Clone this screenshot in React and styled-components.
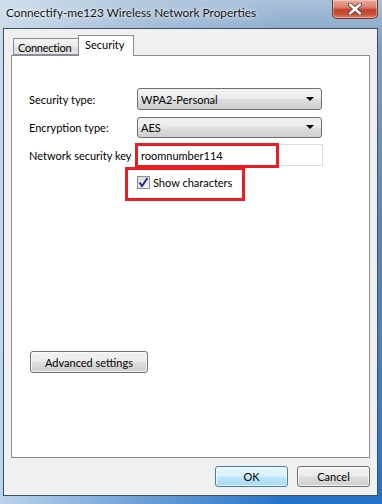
import React from "react"
import styled, { createGlobalStyle } from "styled-components"

const GlobalStyle = createGlobalStyle`
  html, body {
    margin: 0;
    padding: 0;
    width: 382px;
    height: 504px;
    overflow: hidden;
    background: #6f93bb;
  }
  * {
    box-sizing: border-box;
  }
`

const Window = styled.div`
  width: 382px;
  height: 504px;
  display: flex;
  flex-direction: column;
  font-family: Lato, "Liberation Sans", sans-serif;
  font-size: 11px;
  color: #000;
  background:
    linear-gradient(90deg, rgba(214, 228, 240, 0.85) 0%, rgba(190, 210, 230, 0.5) 35%, rgba(120, 150, 190, 0) 75%),
    linear-gradient(180deg, #a9c1da 0%, #7c9cc1 10%, #5d86b4 45%, #3b7fc4 80%, #2272c9 100%);
`

const TitleBar = styled.div`
  height: 28px;
  display: flex;
  align-items: flex-start;
  padding-left: 6px;
`

const Title = styled.div`
  margin-top: 5px;
  font-size: 11.8px;
  color: #111;
  text-shadow: 0 0 6px rgba(255, 255, 255, 0.9), 0 0 2px rgba(255, 255, 255, 0.8);
`

const CloseButton = styled.div`
  margin-left: auto;
  margin-right: 4px;
  width: 46px;
  height: 19px;
  border: 1px solid #6e3a35;
  border-top: none;
  border-radius: 0 0 5px 5px;
  background: linear-gradient(180deg, #e9a99b 0%, #d98271 40%, #c2422a 55%, #cc5236 80%, #e0836b 100%);
  box-shadow: inset 0 0 0 1px rgba(255, 255, 255, 0.35);
  display: flex;
  align-items: center;
  justify-content: center;
`

const Client = styled.div`
  flex: 1;
  margin: 0 4px 8px 3px;
  border: 1px solid #3b4e66;
  background: #f0f0f0;
  padding: 6px 7px 8px 7px;
  display: flex;
  flex-direction: column;
`

const TabRow = styled.div`
  height: 20px;
  display: flex;
  align-items: flex-end;
  padding-left: 2px;
`

const Tab = styled.div`
  position: relative;
  height: ${(p) => (p.active ? "21px" : "17px")};
  width: ${(p) => p.w}px;
  margin-left: ${(p) => (p.active ? "-1px" : "0")};
  margin-bottom: ${(p) => (p.active ? "-1px" : "0")};
  z-index: ${(p) => (p.active ? 2 : 1)};
  border: 1px solid #898c95;
  border-bottom: ${(p) => (p.active ? "none" : "1px solid #898c95")};
  background: ${(p) => (p.active ? "#fff" : "linear-gradient(180deg, #f3f3f3 0%, #ebebeb 50%, #dedede 51%, #e5e5e5 100%)")};
  padding: ${(p) => (p.active ? "2px 0 0 6px" : "2px 0 0 4px")};
  letter-spacing: ${(p) => (p.active ? "0" : "-0.25px")};
  line-height: 14px;
  white-space: nowrap;
  overflow: hidden;
`

const Panel = styled.div`
  flex: 1;
  position: relative;
  z-index: 1;
  border: 1px solid #898c95;
  background: #fff;
  padding: 32px 0 0 17px;
  display: flex;
  flex-direction: column;
`

const FormGrid = styled.div`
  display: grid;
  grid-template-columns: 108px auto;
  grid-auto-rows: 22px;
  row-gap: 6px;
  align-items: center;
`

const Label = styled.div`
  white-space: nowrap;
`

const Select = styled.div`
  width: 185px;
  height: ${(p) => p.h || 22}px;
  border: 1px solid #707070;
  border-radius: 3px;
  background: linear-gradient(180deg, #f2f2f2 0%, #ebebeb 48%, #dddddd 52%, #cfcfcf 100%);
  display: flex;
  align-items: center;
  padding-left: 3px;
  padding-right: 7px;
`

const Arrow = styled.span`
  margin-left: auto;
  width: 0;
  height: 0;
  border-left: 4px solid transparent;
  border-right: 4px solid transparent;
  border-top: 4px solid #000;
`

const KeyField = styled.div`
  position: relative;
  margin-left: -2px;
  width: 188px;
  height: 22px;
  border: 1px solid #dadde4;
  background: #fff;
  display: flex;
  align-items: center;
  padding-left: 5px;
`

const Highlight = styled.div`
  position: absolute;
  left: ${(p) => p.x}px;
  top: ${(p) => p.y}px;
  width: ${(p) => p.w}px;
  height: ${(p) => p.h}px;
  border: 3px solid #ed1c24;
  pointer-events: none;
`

const CheckRow = styled.div`
  position: relative;
  margin: 10px 0 0 108px;
  display: flex;
  align-items: center;
  gap: 3px;
  height: 13px;
`

const CheckBox = styled.div`
  width: 13px;
  height: 13px;
  border: 1px solid #8f8f8f;
  background: linear-gradient(135deg, #dcdcdc 0%, #f6f6f6 100%);
  display: flex;
  align-items: center;
  justify-content: center;
`

const Button = styled.div`
  width: ${(p) => p.w}px;
  height: ${(p) => p.h || 22}px;
  border: 1px solid ${(p) => (p.primary ? "#3c7fb1" : "#707070")};
  border-radius: 3px;
  background: ${(p) =>
    p.primary
      ? "linear-gradient(180deg, #eaf6fd 0%, #d9f0fc 48%, #bee6fd 52%, #a7d9f5 100%)"
      : "linear-gradient(180deg, #f2f2f2 0%, #ebebeb 48%, #dddddd 52%, #cfcfcf 100%)"};
  box-shadow: inset 0 0 0 1px rgba(255, 255, 255, 0.7);
  display: flex;
  align-items: center;
  justify-content: center;
  white-space: nowrap;
`

const AdvancedWrap = styled.div`
  margin: 162px 0 0 1px;
`

const ButtonRow = styled.div`
  display: flex;
  justify-content: flex-end;
  gap: 9px;
  margin-top: 8px;
`

const App = () => {
  return (
    <>
      <GlobalStyle />
      <Window>
        <TitleBar>
          <Title>Connectify-me123 Wireless Network Properties</Title>
          <CloseButton>
            <svg width="14" height="12" viewBox="0 0 14 12">
              <path d="M2 1.5 L12 10.5 M12 1.5 L2 10.5" stroke="#5a3a36" strokeWidth="4.2" strokeLinecap="round" />
              <path d="M2 1.5 L12 10.5 M12 1.5 L2 10.5" stroke="#fff" strokeWidth="2.4" strokeLinecap="round" />
            </svg>
          </CloseButton>
        </TitleBar>
        <Client>
          <TabRow>
            <Tab w={66}>Connection</Tab>
            <Tab active w={56}>Security</Tab>
          </TabRow>
          <Panel>
            <FormGrid>
              <Label>Security type:</Label>
              <Select>
                WPA2-Personal
                <Arrow />
              </Select>
              <Label>Encryption type:</Label>
              <Select h={21}>
                AES
                <Arrow />
              </Select>
              <Label>Network security key</Label>
              <KeyField>
                roomnumber114
                <Highlight x={-1} y={-2} w={144} h={25} />
              </KeyField>
            </FormGrid>
            <CheckRow>
              <CheckBox>
                <svg width="11" height="11" viewBox="0 0 11 11">
                  <path d="M1.5 5.5 L4 9 L9.5 1" fill="none" stroke="#1c2f8a" strokeWidth="2" />
                </svg>
              </CheckBox>
              Show characters
              <Highlight x={-12} y={-9} w={120} h={34} />
            </CheckRow>
            <AdvancedWrap>
              <Button w={118}>Advanced settings</Button>
            </AdvancedWrap>
          </Panel>
          <ButtonRow>
            <Button primary w={73} h={21}>OK</Button>
            <Button w={73} h={21}>Cancel</Button>
          </ButtonRow>
        </Client>
      </Window>
    </>
  )
}

export default App
